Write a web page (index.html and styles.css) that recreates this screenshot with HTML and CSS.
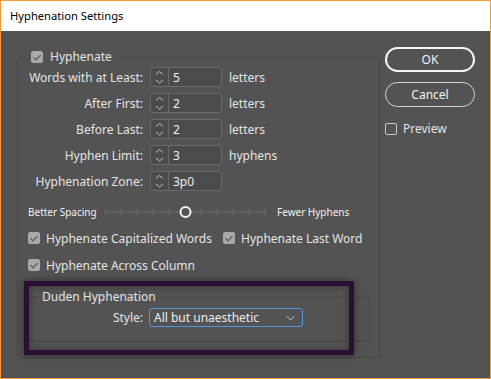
FILE: index.html
```html
<!DOCTYPE html>
<html lang="en">
<head>
<meta charset="UTF-8">
<title>Hyphenation Settings</title>
<link rel="stylesheet" href="styles.css">
</head>
<body>

<div class="window">
    <div class="titlebar">Hyphenation Settings</div>

    <div class="dialog">
        <fieldset class="group main-group">
            <legend><span class="check on"></span>Hyphenate</legend>

            <div class="fields">
                <span class="field-label">Words with at Least:</span>
                <div class="spinner">
                    <svg class="arrows" width="17" height="18" viewBox="0 0 17 18"><path d="M5 6.5 L8.5 3.5 L12 6.5 M5 12 L8.5 15 L12 12"/></svg>
                    <span class="value">5</span>
                </div>
                <span class="unit">letters</span>

                <span class="field-label">After First:</span>
                <div class="spinner">
                    <svg class="arrows" width="17" height="18" viewBox="0 0 17 18"><path d="M5 6.5 L8.5 3.5 L12 6.5 M5 12 L8.5 15 L12 12"/></svg>
                    <span class="value">2</span>
                </div>
                <span class="unit">letters</span>

                <span class="field-label">Before Last:</span>
                <div class="spinner">
                    <svg class="arrows" width="17" height="18" viewBox="0 0 17 18"><path d="M5 6.5 L8.5 3.5 L12 6.5 M5 12 L8.5 15 L12 12"/></svg>
                    <span class="value">2</span>
                </div>
                <span class="unit">letters</span>

                <span class="field-label">Hyphen Limit:</span>
                <div class="spinner">
                    <svg class="arrows" width="17" height="18" viewBox="0 0 17 18"><path d="M5 6.5 L8.5 3.5 L12 6.5 M5 12 L8.5 15 L12 12"/></svg>
                    <span class="value">3</span>
                </div>
                <span class="unit">hyphens</span>

                <span class="field-label">Hyphenation Zone:</span>
                <div class="spinner">
                    <svg class="arrows" width="17" height="18" viewBox="0 0 17 18"><path d="M5 6.5 L8.5 3.5 L12 6.5 M5 12 L8.5 15 L12 12"/></svg>
                    <span class="value">3p0</span>
                </div>
                <span></span>
            </div>

            <!-- spacing / hyphens slider -->
            <div class="slider-row">
                <span class="slider-label left">Better Spacing</span>
                <svg class="slider" width="162" height="14" viewBox="0 0 162 14">
                    <path class="track" d="M0.5 7 H160.5 M0.5 4 V10 M16.5 4 V10 M32.5 4 V10 M48.5 4 V10 M64.5 4 V10 M96.5 4 V10 M112.5 4 V10 M128.5 4 V10 M144.5 4 V10 M160.5 4 V10"/>
                    <circle class="knob" cx="80.5" cy="7" r="5"/>
                </svg>
                <span class="slider-label">Fewer Hyphens</span>
            </div>

            <div class="check-grid">
                <label class="check-item"><span class="check on"></span>Hyphenate Capitalized Words</label>
                <label class="check-item"><span class="check on"></span>Hyphenate Last Word</label>
                <label class="check-item"><span class="check on"></span>Hyphenate Across Column</label>
            </div>

            <fieldset class="group duden-group">
                <legend>Duden Hyphenation</legend>
                <div class="style-row">
                    <span class="field-label">Style:</span>
                    <div class="dropdown">
                        <span>All but unaesthetic</span>
                        <svg width="9" height="6" viewBox="0 0 9 6"><path d="M0.5 1 L4.5 5 L8.5 1"/></svg>
                    </div>
                </div>
            </fieldset>
        </fieldset>

        <div class="side">
            <button class="btn default">OK</button>
            <button class="btn">Cancel</button>
            <label class="check-item preview"><span class="check"></span>Preview</label>
        </div>

        <!-- annotation frame drawn over the Duden group -->
        <div class="highlight"></div>
    </div>
</div>

</body>
</html>
```

FILE: styles.css
```css
body {
    margin: 0;
    background-color: #ffffff;
    font-family: "Noto Sans", "Open Sans", sans-serif;
}

.window {
    width: 491px;
    height: 379px;
    box-sizing: border-box;
    border: 1px solid #f39a3b;
    background-color: #535353;
    display: flex;
    flex-direction: column;
}

.titlebar {
    height: 30px;
    background-color: #ffffff;
    color: #000000;
    font-size: 11.2px;
    line-height: 30px;
    padding-left: 9px;
}

.dialog {
    flex: 1;
    position: relative;
    display: flex;
    padding: 16px 0 0 16px;
    color: #e4e4e4;
    font-size: 12px;
}

/* --- group boxes --- */
.group {
    margin: 0;
    padding: 0;
    border: 1px solid #464646;
    border-radius: 4px;
    min-inline-size: 0;
}

.group legend {
    display: flex;
    align-items: center;
    height: 16px;
    line-height: 16px;
    font-size: 12px;
}

.main-group {
    width: 363px;
    height: 309px;
    box-sizing: border-box;
    margin-top: 2px;
}

.main-group > legend {
    margin-left: 9px;
    padding: 0 8px 0 4px;
    gap: 7px;
}

/* --- checkboxes --- */
.check {
    width: 12px;
    height: 12px;
    box-sizing: border-box;
    border-radius: 2px;
    border: 1px solid #c8c8c8;
    flex: none;
    position: relative;
}

.check.on {
    background-color: #a9a9a9;
    border-color: #a9a9a9;
}

.check.on::after {
    content: "";
    position: absolute;
    left: 3px;
    top: 1px;
    width: 3px;
    height: 6px;
    border: solid #505050;
    border-width: 0 1.5px 1.5px 0;
    transform: rotate(45deg);
}

/* --- number fields --- */
.fields {
    display: grid;
    grid-template-columns: 125px 72px auto;
    grid-auto-rows: 20px;
    row-gap: 6px;
    column-gap: 7px;
    align-items: center;
    padding-top: 2px;
    font-size: 12px;
}

.field-label {
    text-align: right;
}

.spinner {
    height: 20px;
    box-sizing: border-box;
    border: 1px solid #6a6a6a;
    border-radius: 3px;
    background-color: #4b4b4b;
    display: flex;
    align-items: center;
}

.arrows {
    flex: none;
    border-right: 1px solid #6a6a6a;
}

.arrows path,
.dropdown path {
    fill: none;
    stroke: #c4c4c4;
    stroke-width: 1;
}

.value {
    padding-left: 4px;
    color: #f0f0f0;
}

/* --- slider --- */
.slider-row {
    display: flex;
    align-items: center;
    height: 14px;
    margin-top: 14px;
    padding-left: 10px;
}

.slider-label {
    font-size: 10px;
    color: #f0f0f0;
}

.slider-label.left {
    width: 77px;
}

.slider {
    margin-right: 10px;
}

.track {
    fill: none;
    stroke: #6e6e6e;
    stroke-width: 1;
}

.knob {
    fill: #535353;
    stroke: #f2f2f2;
    stroke-width: 2;
}

/* --- option checkboxes --- */
.check-grid {
    display: grid;
    grid-template-columns: 195px auto;
    grid-auto-rows: 16px;
    row-gap: 11px;
    margin-top: 11px;
    padding-left: 10px;
    font-size: 12px;
}

.check-item {
    display: flex;
    align-items: center;
    gap: 6px;
    white-space: nowrap;
}

/* --- Duden group --- */
.duden-group {
    margin: 16px 9px 0 10px;
    padding: 3px 0 14px;
}

.duden-group > legend {
    margin-left: 9px;
    padding: 0 4px;
}

.style-row {
    display: flex;
    align-items: center;
    gap: 6px;
    font-size: 12px;
}

.style-row .field-label {
    width: 114px;
}

.dropdown {
    width: 154px;
    height: 19px;
    box-sizing: border-box;
    border: 1px solid #4f97df;
    border-radius: 3px;
    display: flex;
    align-items: center;
    justify-content: space-between;
    padding: 0 7px 0 4px;
    color: #ececec;
}

/* --- right column --- */
.side {
    width: 90px;
    margin-left: 5px;
    display: flex;
    flex-direction: column;
}

.btn {
    height: 25px;
    border-radius: 13px;
    border: 1px solid #d4d4d4;
    background: transparent;
    color: #f2f2f2;
    font-family: inherit;
    font-size: 12px;
    padding: 0;
    margin-bottom: 10px;
}

.btn.default {
    border: 2px solid #f4f4f4;
}

.preview {
    margin-top: 3px;
    font-size: 12px;
}

/* --- annotation frame --- */
.highlight {
    position: absolute;
    left: 23px;
    top: 250px;
    width: 330px;
    height: 74px;
    box-sizing: border-box;
    border: 5px solid #2b0e33;
    box-shadow: 0 0 8px rgba(0, 0, 0, 0.45), inset 0 0 8px rgba(0, 0, 0, 0.35);
}
```
